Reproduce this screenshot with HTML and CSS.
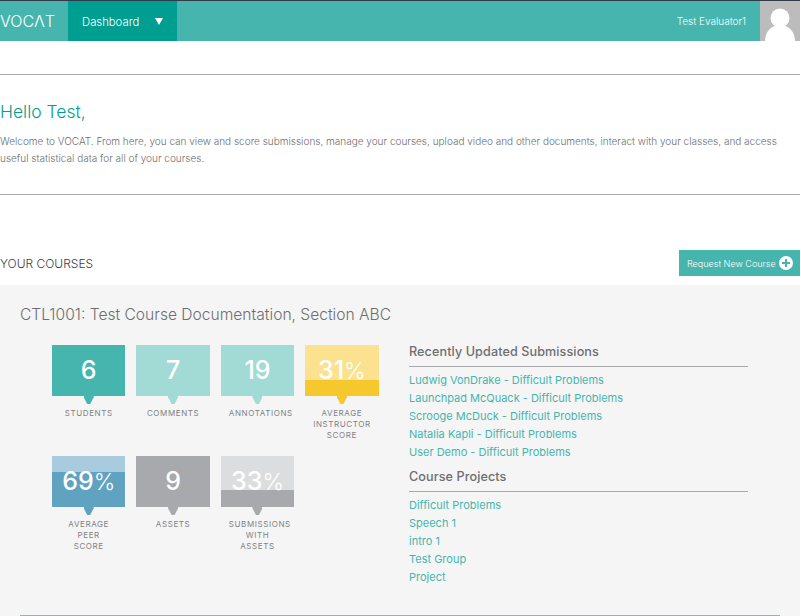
FILE: index.html
```html
<!DOCTYPE html>
<html lang="en">
    <head>
        <meta charset="UTF-8">
        <meta name="viewport" content="width=device-width, initial-scale=1.0">
        <title>VOCAT</title>
        <link rel="stylesheet" href="styles.css">
    </head>

    <body>
        <header class="topbar">
            <a class="logo" aria-label="VOCAT">VOCΛT</a>
            <a class="nav-current">Dashboard <span class="nav-arrow"></span></a>
            <span class="user-name">Test Evaluator1</span>
            <svg class="avatar" viewBox="0 0 40 40" aria-hidden="true">
                <rect width="40" height="40" fill="#bcbcbc"/>
                <circle cx="20" cy="17" r="9.5" fill="#fff"/>
                <path d="M5 40 C5 31 11 24 20 24 C29 24 35 31 35 40 Z" fill="#fff"/>
            </svg>
        </header>

        <section class="welcome">
            <h1>Hello Test,</h1>
            <p>Welcome to VOCAT. From here, you can view and score submissions, manage your courses, upload video and other documents, interact with your classes, and access useful statistical data for all of your courses.</p>
        </section>

        <div class="courses-head">
            <h2>YOUR COURSES</h2>
            <a class="request-btn">Request New Course
                <svg class="plus" viewBox="0 0 14 14" aria-hidden="true">
                    <circle cx="7" cy="7" r="7" fill="#fff"/>
                    <path d="M7 3 V11 M3 7 H11" stroke="#45b5ae" stroke-width="2"/>
                </svg>
            </a>
        </div>

        <section class="course">
            <h3>CTL1001: Test Course Documentation, Section ABC</h3>
            <div class="course-body">
                <div class="tiles">
                    <div class="tile">
                        <div class="box teal"><span class="num">6</span></div>
                        <div class="tail teal"></div>
                        <p class="label">Students</p>
                    </div>
                    <div class="tile">
                        <div class="box pale"><span class="num">7</span></div>
                        <div class="tail pale"></div>
                        <p class="label">Comments</p>
                    </div>
                    <div class="tile">
                        <div class="box pale"><span class="num">19</span></div>
                        <div class="tail pale"></div>
                        <p class="label">Annotations</p>
                    </div>
                    <div class="tile">
                        <div class="box yellow-bg"><div class="fill yellow" style="height: 31%"></div><span class="num">31<small>%</small></span></div>
                        <div class="tail yellow"></div>
                        <p class="label">Average Instructor Score</p>
                    </div>
                    <div class="tile">
                        <div class="box blue-bg"><div class="fill blue" style="height: 69%"></div><span class="num">69<small>%</small></span></div>
                        <div class="tail blue"></div>
                        <p class="label">Average Peer<br>Score</p>
                    </div>
                    <div class="tile">
                        <div class="box gray"><span class="num">9</span></div>
                        <div class="tail gray"></div>
                        <p class="label">Assets</p>
                    </div>
                    <div class="tile">
                        <div class="box gray-bg"><div class="fill gray" style="height: 33%"></div><span class="num">33<small>%</small></span></div>
                        <div class="tail gray"></div>
                        <p class="label">Submissions With Assets</p>
                    </div>
                </div>

                <div class="lists">
                    <h4>Recently Updated Submissions</h4>
                    <ul>
                        <li><a>Ludwig VonDrake - Difficult Problems</a></li>
                        <li><a>Launchpad McQuack - Difficult Problems</a></li>
                        <li><a>Scrooge McDuck - Difficult Problems</a></li>
                        <li><a>Natalia Kapli - Difficult Problems</a></li>
                        <li><a>User Demo - Difficult Problems</a></li>
                    </ul>
                    <h4>Course Projects</h4>
                    <ul>
                        <li><a>Difficult Problems</a></li>
                        <li><a>Speech 1</a></li>
                        <li><a>intro 1</a></li>
                        <li><a>Test Group</a></li>
                        <li><a>Project</a></li>
                    </ul>
                </div>
            </div>
            <div class="course-rule"></div>
        </section>
    </body>
</html>
```

FILE: styles.css
```css
html{
    overflow: hidden;
}

body{
    margin: 0;
    width: 800px;
    background: #fff;
    color: #6d6e71;
    font-family: "Inter", "Lato", sans-serif;
}

.topbar{
    display: flex;
    align-items: center;
    height: 40px;
    border-top: 1px solid #2f3b46;
    background: #45b5ae;
    color: #fff;
}

.logo{
    width: 68px;
    font-size: 16px;
    font-weight: 300;
}

.nav-current{
    display: flex;
    align-items: center;
    justify-content: space-between;
    box-sizing: border-box;
    width: 109px;
    height: 40px;
    padding: 1px 14px 0;
    background: #009e90;
    font-size: 11.3px;
    font-weight: 300;
}

.nav-arrow{
    width: 0;
    height: 0;
    border-left: 4.5px solid transparent;
    border-right: 4.5px solid transparent;
    border-top: 7px solid #fff;
}

.user-name{
    margin-left: auto;
    margin-right: 14px;
    font-size: 10px;
    font-weight: 300;
}

.avatar{
    display: block;
    width: 40px;
    height: 40px;
}

.welcome{
    margin-top: 33px;
    padding: 20px 0 27px;
    border-top: 1px solid #a7a9ac;
    border-bottom: 1px solid #a7a9ac;
}

.welcome h1{
    margin: 0 0 4px;
    color: #009e90;
    font-size: 17.5px;
    font-weight: 300;
    line-height: 34px;
}

.welcome p{
    margin: 0;
    font-size: 10px;
    font-weight: 300;
    line-height: 17px;
}

.courses-head{
    display: flex;
    align-items: center;
    justify-content: space-between;
    margin-top: 55px;
}

.courses-head h2{
    margin: 0;
    color: #414042;
    font-size: 12px;
    font-weight: 300;
}

.request-btn{
    display: flex;
    align-items: center;
    justify-content: space-between;
    box-sizing: border-box;
    width: 121px;
    height: 26px;
    padding: 0 7px 0 8px;
    background: #45b5ae;
    color: #fff;
    font-size: 9px;
    font-weight: 300;
    white-space: nowrap;
}

.plus{
    width: 14px;
    height: 14px;
}

.course{
    margin-top: 9px;
    padding: 18px 20px 0;
    background: #f5f5f5;
}

.course h3{
    margin: 0 0 18px;
    font-size: 15.6px;
    font-weight: 300;
    line-height: 24px;
}

.course-body{
    display: flex;
    height: 270px;
    padding-left: 32px;
}

.tiles{
    display: grid;
    grid-template-columns: repeat(4, 73.4px);
    grid-auto-rows: 111px;
    column-gap: 11px;
    width: 327px;
}

.box{
    position: relative;
    display: flex;
    flex-direction: column;
    justify-content: flex-end;
    height: 51px;
}

.num{
    position: absolute;
    top: 0;
    left: 0;
    right: 0;
    color: #fff;
    font-size: 25px;
    font-weight: 500;
    line-height: 50px;
    text-align: center;
}

.num small{
    font-size: 23px;
    font-weight: 300;
}

.tail{
    width: 10px;
    height: 8px;
    margin: 0 auto;
    clip-path: polygon(0 0, 100% 0, 100% 15%, 65% 100%, 35% 100%, 0 15%);
}

.label{
    margin: 4px 0 0;
    padding: 0 8px;
    color: #808285;
    font-size: 8px;
    font-weight: 400;
    line-height: 11px;
    letter-spacing: 0.6px;
    text-align: center;
    text-transform: uppercase;
}

.teal{ background: #45b5ae; }
.pale{ background: #a2dad6; }
.yellow{ background: #f5c82d; }
.yellow-bg{ background: #fce28f; }
.blue{ background: #60a3c1; }
.blue-bg{ background: #a8cbdd; }
.gray{ background: #a7a9ac; }
.gray-bg{ background: #dcddde; }

.lists{
    width: 339px;
    margin-left: 30px;
    margin-top: -1px;
}

.lists h4{
    margin: 0 0 4px;
    padding-bottom: 6px;
    border-bottom: 1px solid #a7a9ac;
    font-size: 12.6px;
    font-weight: 500;
    line-height: 16px;
    letter-spacing: 0.1px;
}

.lists ul{
    margin: 0 0 8px;
    padding: 0;
    list-style: none;
}

.lists li{
    color: #45b5ae;
    font-size: 11px;
    font-weight: 400;
    line-height: 18px;
}

.course-rule{
    height: 1px;
    background: #a7a9ac;
}
```
